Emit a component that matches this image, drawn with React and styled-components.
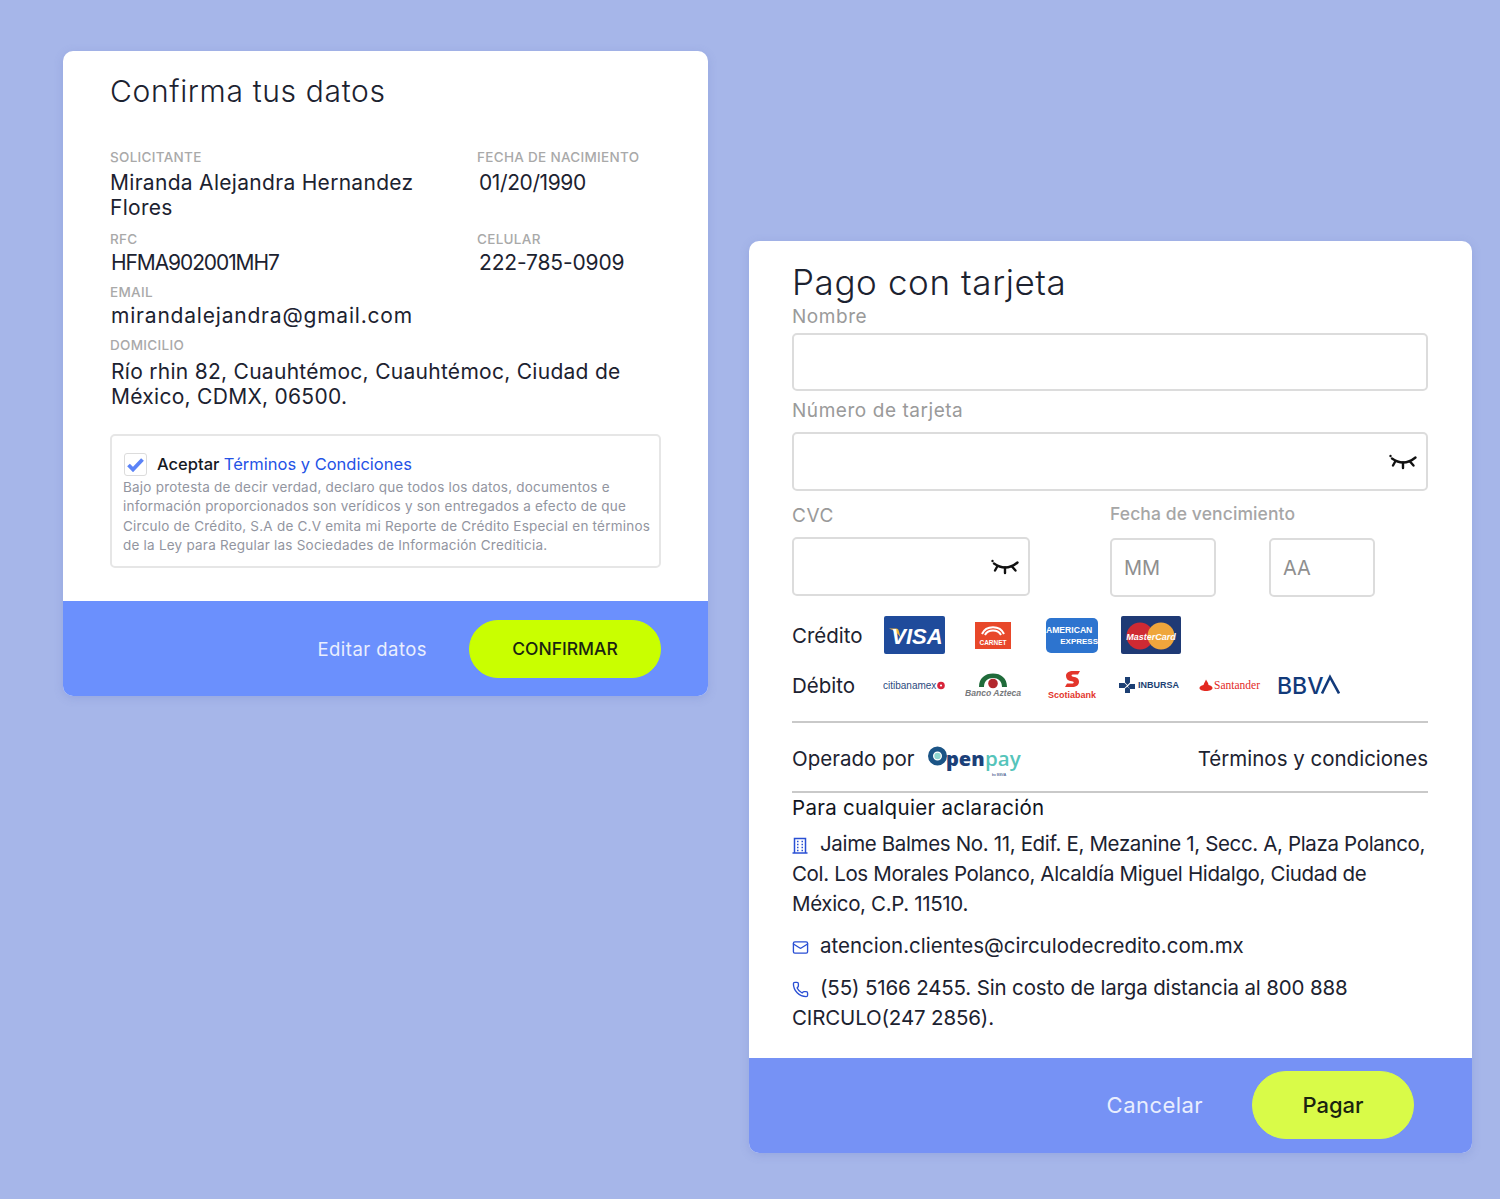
import styled, { createGlobalStyle } from "styled-components";
import { Mail, Phone } from "lucide-react";

const GlobalStyle = createGlobalStyle`
  body {
    margin: 0;
    background: #a6b6e9;
    font-family: Inter, "Liberation Sans", sans-serif;
    color: #1c2230;
  }
`;

const Page = styled.div`
  display: flex;
  align-items: flex-start;
  gap: 41px;
  width: 1500px;
  height: 1199px;
  padding: 51px 0 0 63px;
  box-sizing: border-box;
  overflow: hidden;
`;

const Card = styled.section`
  background: #fff;
  border-radius: 10px;
  overflow: hidden;
  flex: none;
  width: ${(p) => p.$width}px;
  margin-top: ${(p) => p.$top || 0}px;
  box-shadow: 0 2px 10px rgba(90, 110, 190, 0.22);
`;

const Body = styled.div`
  padding: ${(p) => p.$padding};
`;

const Title = styled.h1`
  margin: 0;
  font-weight: 300;
  font-size: ${(p) => p.$size}px;
  line-height: ${(p) => p.$line}px;
  letter-spacing: ${(p) => p.$track}px;
  color: #1c2230;
`;

const InfoGrid = styled.div`
  display: grid;
  grid-template-columns: 367px 1fr;
  margin-top: 37px;
`;

const Field = styled.div`
  grid-column: ${(p) => (p.$wide ? "1 / -1" : "auto")};
  margin-bottom: ${(p) => p.$after || 0}px;
  padding-right: ${(p) => (p.$wide ? 0 : 30)}px;
`;

const SmallLabel = styled.div`
  font-size: 13.5px;
  line-height: 18px;
  font-weight: 500;
  letter-spacing: 0.3px;
  white-space: nowrap;
  color: #a9a9a9;
`;

const Value = styled.div`
  font-size: 21px;
  line-height: 25px;
  font-weight: 400;
  letter-spacing: ${(p) => p.$track || 0}px;
  color: #1c2230;
  margin-top: ${(p) => p.$gap}px;
  margin-left: ${(p) => p.$indent || 0}px;
`;

const TermsBox = styled.div`
  margin-top: 25px;
  height: 134px;
  box-sizing: border-box;
  padding: 17px 4px 0 11px;
  border: 2px solid #e6e6e6;
  border-radius: 5px;
`;

const TermsHead = styled.div`
  display: flex;
  align-items: center;
  gap: 10px;
  font-size: 16.5px;
  line-height: 23px;
  font-weight: 500;
  color: #15191f;
`;

const CheckBox = styled.span`
  width: 23px;
  height: 23px;
  margin-left: 1px;
  box-sizing: border-box;
  display: flex;
  align-items: center;
  justify-content: center;
  border: 1px solid #dcdcdc;
  border-radius: 3px;
`;

const TermsLink = styled.span`
  color: #2452e6;
  font-weight: 400;
`;

const TermsText = styled.p`
  margin: 2px 0 0;
  font-size: 13.5px;
  line-height: 19.3px;
  letter-spacing: 0.22px;
  color: #92959f;
`;

const Footer = styled.div`
  display: flex;
  align-items: center;
  justify-content: flex-end;
  box-sizing: border-box;
  height: 95px;
  background: ${(p) => p.$color};
  padding-right: ${(p) => p.$pad}px;
  padding-bottom: ${(p) => p.$lift || 0}px;
  gap: ${(p) => p.$gap}px;
  margin-top: ${(p) => p.$top}px;
`;

const GhostAction = styled.span`
  color: #e9eefe;
  font-size: ${(p) => p.$size}px;
  letter-spacing: 0.45px;
  font-weight: 400;
`;

const PrimaryButton = styled.button`
  width: ${(p) => p.$w}px;
  height: ${(p) => p.$h}px;
  border: 1px solid ${(p) => p.$color};
  border-radius: 40px;
  background: ${(p) => p.$color};
  color: #1a2410;
  font-family: inherit;
  font-size: ${(p) => p.$size}px;
  font-weight: 500;
`;

const FormLabel = styled.div`
  font-size: ${(p) => p.$size || 19}px;
  line-height: 22px;
  letter-spacing: ${(p) => p.$track ?? 0.55}px;
  color: ${(p) => p.$color || "#9a9a9a"};
  margin-top: ${(p) => p.$top}px;
  margin-bottom: ${(p) => p.$bottom}px;
  font-weight: ${(p) => p.$weight || 400};
`;

const InputBox = styled.div`
  position: relative;
  box-sizing: border-box;
  display: flex;
  align-items: center;
  padding: 0 12px;
  width: ${(p) => (p.$w ? `${p.$w}px` : "100%")};
  height: ${(p) => p.$h || 59}px;
  border: 2px solid #dcdcdc;
  border-radius: 5px;
  font-size: 20px;
  color: #8f8f8f;
`;

const EyeSlot = styled.span`
  position: absolute;
  right: 8px;
  top: 50%;
  transform: translateY(-50%);
  display: flex;
`;

const SplitRow = styled.div`
  display: flex;
  gap: 80px;
`;

const DateInputs = styled.div`
  display: flex;
  gap: 53px;
`;

const BrandRow = styled.div`
  display: flex;
  align-items: center;
  height: ${(p) => p.$h}px;
  margin-top: ${(p) => p.$top}px;
`;

const BrandLabel = styled.span`
  width: ${(p) => p.$w}px;
  flex: none;
  font-size: 20.5px;
  color: #1c2230;
`;

const LogoSlot = styled.span`
  display: flex;
  flex: none;
  margin-left: ${(p) => p.$left || 0}px;
`;

const Rule = styled.hr`
  margin: ${(p) => p.$top}px 0 0;
  border: 0;
  border-top: 2px solid #c9c9c9;
`;

const OperatedRow = styled.div`
  display: flex;
  align-items: center;
  justify-content: space-between;
  box-sizing: border-box;
  height: 68px;
  padding-top: 3px;
  font-size: 20.5px;
  color: #1c2230;
`;

const OperatedBy = styled.div`
  display: flex;
  align-items: center;
  gap: 13px;
`;

const ContactHeading = styled.div`
  margin-top: 3px;
  font-size: 20.5px;
  line-height: 24px;
  font-weight: 400;
  letter-spacing: 0.3px;
  color: #10141c;
`;

const ContactLine = styled.p`
  margin: ${(p) => p.$top}px 0 0;
  font-size: 20.5px;
  line-height: 30px;
  letter-spacing: ${(p) => p.$track || 0}px;
  color: #1c2230;
`;

const ContactIcon = styled.span`
  display: inline-block;
  width: 28px;
  vertical-align: -3px;
  color: #2a4fd4;
  line-height: 0;
`;

const EyeClosed = () => (
  <svg width="30" height="20" viewBox="0 0 30 20" fill="none" stroke="#111" strokeWidth="2.400" strokeLinecap="round">
    <path d="M4 6.500C9 10 13 10.500 15 10.500S22 10 27.500 5.500" />
    <path d="M7.500 9L5 13.500M15 10.500V16M22 9.500L25.500 13.500" />
    <circle cx="2.500" cy="4" r="1.200" fill="#111" stroke="none" />
  </svg>
);

const BuildingIcon = () => (
  <svg width="16" height="17" viewBox="0 0 16 17" fill="none" stroke="currentColor" strokeWidth="1.500">
    <path d="M2.500 16V1.500H13.500V16M.5 16H15.500" />
    <path d="M5 4.500h1.500M9.500 4.500H11M5 7.500h1.500M9.500 7.500H11M5 10.500h1.500M9.500 10.500H11M5 13.500h1.500M9.500 13.500H11" strokeWidth="1.600" />
  </svg>
);

const VisaLogo = () => (
  <svg width="61" height="38" viewBox="0 0 61 38">
    <rect width="61" height="38" rx="2" fill="#1f4b9b" />
    <path d="M5 12.500h7c2 0 2.500 1 3 3l1.500 6C14 17 10 14 5 12.500Z" fill="#f0b43c" />
    <text x="33" y="27.500" textAnchor="middle" fontFamily="Liberation Sans" fontWeight="700" fontStyle="italic" fontSize="22" fill="#fff">VISA</text>
  </svg>
);

const CarnetLogo = () => (
  <svg width="36" height="27" viewBox="0 0 36 27">
    <rect width="36" height="27" fill="#e8482a" />
    <path d="M7 12C11 3 25 3 29 12M10 13C13 7 23 7 26 13" fill="none" stroke="#fff" strokeWidth="2" />
    <text x="18" y="22.500" textAnchor="middle" fontFamily="Liberation Sans" fontWeight="700" fontSize="6.500" fill="#fff">CARNET</text>
  </svg>
);

const AmexLogo = () => (
  <svg width="52" height="35" viewBox="0 0 52 35">
    <rect width="52" height="35" rx="5" fill="#2d74cf" />
    <text x="0" y="15" fontFamily="Liberation Sans" fontWeight="700" fontSize="8.600" fill="#fff">AMERICAN</text>
    <text x="52" y="26" textAnchor="end" fontFamily="Liberation Sans" fontWeight="700" fontSize="8" fill="#fff">EXPRESS</text>
  </svg>
);

const MasterCardLogo = () => (
  <svg width="60" height="38" viewBox="0 0 60 38">
    <rect width="60" height="38" rx="2" fill="#1f3a75" />
    <circle cx="19" cy="20" r="13.500" fill="#cf2a33" />
    <circle cx="40" cy="20" r="13.500" fill="#efa63c" />
    <text x="30" y="23.500" textAnchor="middle" fontFamily="Liberation Sans" fontWeight="700" fontStyle="italic" fontSize="9" fill="#fff">MasterCard</text>
  </svg>
);

const CitibanamexLogo = () => (
  <svg width="62" height="14" viewBox="0 0 62 14">
    <text x="0" y="10.500" fontFamily="Liberation Sans" fontSize="10" fill="#2c4a7d">citibanamex</text>
    <circle cx="58" cy="7.500" r="3.800" fill="#d8243a" />
    <circle cx="58" cy="7.500" r="1.100" fill="#fff" />
  </svg>
);

const AztecaLogo = () => (
  <svg width="58" height="26" viewBox="0 0 58 26">
    <path d="M14 15C14 6 20 1.500 28 1.500S42 6 42 15H37C37 9 33 6 28 6S19 9 19 15Z" fill="#1f6b3a" />
    <circle cx="28" cy="11.500" r="4.800" fill="#b3282d" />
    <text x="28" y="24" textAnchor="middle" fontFamily="Liberation Sans" fontWeight="700" fontStyle="italic" fontSize="8.600" fill="#77797c">Banco Azteca</text>
  </svg>
);

const ScotiaLogo = () => (
  <svg width="50" height="30" viewBox="0 0 50 30">
    <path d="M19 6C19 2.500 22 1 26 1h7l-2 3.500h-5c-2 0-2 2 0 2.200 4 .3 6 2 6 5 0 3.300-3 5.300-7 5.300h-7l2-3.500h5c2 0 2.500-2 0-2.300-4-.4-6-2-6-5.200Z" fill="#e3352b" />
    <text x="25" y="28" textAnchor="middle" fontFamily="Liberation Sans" fontWeight="700" fontSize="9" fill="#e3352b">Scotiabank</text>
  </svg>
);

const InburLogo = () => (
  <svg width="67" height="18" viewBox="0 0 67 18">
    <path d="M7 1h5v5.500L9.500 9 7 6.500ZM1 7h5.500L9 9.500 6.500 12H1ZM12 8h5v5h-5L9.800 10.500ZM7 12.500 9.300 10.800 12 13v4H7Z" fill="#1c3f73" />
    <text x="20" y="11.500" fontFamily="Liberation Sans" fontWeight="700" fontSize="9" fill="#1c3f73">INBURSA</text>
  </svg>
);

const SantanderLogo = () => (
  <svg width="63" height="14" viewBox="0 0 63 14">
    <path d="M7 1.500C8 4 9.500 4.500 9.500 7 12 7.500 13.500 8.500 13.500 10 13.500 12 10.500 13 7 13S.5 12 .5 10C.5 8.500 2 7.500 4.500 7 5 5 6 4 7 1.500Z" fill="#e3281f" />
    <text x="15" y="11" fontFamily="Liberation Serif" fontSize="11.500" fill="#e3281f">Santander</text>
  </svg>
);

const BbvaLogo = () => (
  <svg width="63" height="30" viewBox="0 0 63 30">
    <text x="0" y="23.500" fontFamily="Inter" fontWeight="500" fontSize="23" fill="#123a7a">BBV</text>
    <path d="M45 23.500L53 7 62 23.500" fill="none" stroke="#123a7a" strokeWidth="2.600" />
  </svg>
);

const OpenpayLogo = () => (
  <svg width="95" height="34" viewBox="0 0 95 34">
    <circle cx="9.500" cy="14" r="7" fill="none" stroke="#1b5486" strokeWidth="5" />
    <circle cx="9.500" cy="14" r="3.200" fill="#8fd6d0" />
    <text x="18" y="23.500" fontFamily="Open Sans" fontWeight="800" fontSize="20" fill="#1b4078">pen</text>
    <text x="57" y="23.500" fontFamily="Open Sans" fontWeight="600" fontSize="20.500" fill="#55c4ba">pay</text>
    <text x="64" y="33.500" fontFamily="Liberation Sans" fontSize="3.600" fill="#1b4078">by BBVA</text>
  </svg>
);

export default function App() {
  return (
    <Page>
      <GlobalStyle />
      <Card $width={645}>
        <Body $padding="20px 47px 0">
          <Title $size={30} $line={40} $track={0.65}>Confirma tus datos</Title>
          <InfoGrid>
            <Field $after={10}>
              <SmallLabel>SOLICITANTE</SmallLabel>
              <Value $gap={4} $track={0.3}>Miranda Alejandra Hernandez Flores</Value>
            </Field>
            <Field $after={10}>
              <SmallLabel>FECHA DE NACIMIENTO</SmallLabel>
              <Value $gap={4} $indent={2} $track={-0.4}>01/20/1990</Value>
            </Field>
            <Field $after={8}>
              <SmallLabel>RFC</SmallLabel>
              <Value $gap={2} $indent={1} $track={-1.1}>HFMA902001MH7</Value>
            </Field>
            <Field $after={8}>
              <SmallLabel>CELULAR</SmallLabel>
              <Value $gap={2} $indent={2} $track={-0.15}>222-785-0909</Value>
            </Field>
            <Field $wide $after={8}>
              <SmallLabel>EMAIL</SmallLabel>
              <Value $gap={2} $indent={1} $track={0.8}>mirandalejandra@gmail.com</Value>
            </Field>
            <Field $wide>
              <SmallLabel>DOMICILIO</SmallLabel>
              <Value $gap={5} $indent={1} $track={0.28}>Río rhin 82, Cuauhtémoc, Cuauhtémoc, Ciudad de México, CDMX, 06500.</Value>
            </Field>
          </InfoGrid>
          <TermsBox>
            <TermsHead>
              <CheckBox>
                <svg width="17" height="14" viewBox="0 0 17 14" fill="none" stroke="#5b83f7" strokeWidth="3.800">
                  <path d="M1.500 7L6 11.500 15.500 1.500" />
                </svg>
              </CheckBox>
              <span>Aceptar <TermsLink>Términos y Condiciones</TermsLink></span>
            </TermsHead>
            <TermsText>
              Bajo protesta de decir verdad, declaro que todos los datos, documentos e información proporcionados son verídicos y son entregados a efecto de que Circulo de Crédito, S.A de C.V emita mi Reporte de Crédito Especial en términos de la Ley para Regular las Sociedades de Información Crediticia.
            </TermsText>
          </TermsBox>
        </Body>
        <Footer $color="#6b90fd" $pad={47} $gap={42} $top={33}>
          <GhostAction $size={18.5}>Editar datos</GhostAction>
          <PrimaryButton $w={192} $h={58} $size={17.5} $color="#c9ff00">CONFIRMAR</PrimaryButton>
        </Footer>
      </Card>

      <Card $width={723} $top={190}>
        <Body $padding="19px 44px 0 43px">
          <Title $size={35} $line={44} $track={0.6}>Pago con tarjeta</Title>
          <FormLabel $top={2} $bottom={5}>Nombre</FormLabel>
          <InputBox $h={58} />
          <FormLabel $top={9} $bottom={10}>Número de tarjeta</FormLabel>
          <InputBox>
            <EyeSlot><EyeClosed /></EyeSlot>
          </InputBox>
          <SplitRow>
            <div>
              <FormLabel $top={14} $bottom={10}>CVC</FormLabel>
              <InputBox $w={238}>
                <EyeSlot><EyeClosed /></EyeSlot>
              </InputBox>
            </div>
            <div>
              <FormLabel $top={12} $bottom={13} $weight={500} $size={17.5} $track={0.1} $color="#a6a6a6">Fecha de vencimiento</FormLabel>
              <DateInputs>
                <InputBox $w={106}>MM</InputBox>
                <InputBox $w={106}>AA</InputBox>
              </DateInputs>
            </div>
          </SplitRow>
          <BrandRow $h={38} $top={19}>
            <BrandLabel $w={92}>Crédito</BrandLabel>
            <LogoSlot><VisaLogo /></LogoSlot>
            <LogoSlot $left={30}><CarnetLogo /></LogoSlot>
            <LogoSlot $left={35}><AmexLogo /></LogoSlot>
            <LogoSlot $left={23}><MasterCardLogo /></LogoSlot>
          </BrandRow>
          <BrandRow $h={30} $top={16}>
            <BrandLabel $w={91}>Débito</BrandLabel>
            <LogoSlot><CitibanamexLogo /></LogoSlot>
            <LogoSlot $left={20}><AztecaLogo /></LogoSlot>
            <LogoSlot $left={24}><ScotiaLogo /></LogoSlot>
            <LogoSlot $left={21}><InburLogo /></LogoSlot>
            <LogoSlot $left={14}><SantanderLogo /></LogoSlot>
            <LogoSlot $left={15}><BbvaLogo /></LogoSlot>
          </BrandRow>
          <Rule $top={21} />
          <OperatedRow>
            <OperatedBy>
              Operado por
              <OpenpayLogo />
            </OperatedBy>
            <span>Términos y condiciones</span>
          </OperatedRow>
          <Rule $top={0} />
          <ContactHeading>Para cualquier aclaración</ContactHeading>
          <ContactLine $top={9} $track={-0.35}>
            <ContactIcon><BuildingIcon /></ContactIcon>
            Jaime Balmes No. 11, Edif. E, Mezanine 1, Secc. A, Plaza Polanco, Col. Los Morales Polanco, Alcaldía Miguel Hidalgo, Ciudad de México, C.P. 11510.
          </ContactLine>
          <ContactLine $top={12}>
            <ContactIcon><Mail size={17} strokeWidth={1.9} /></ContactIcon>
            atencion.clientes@circulodecredito.com.mx
          </ContactLine>
          <ContactLine $top={12} $track={-0.15}>
            <ContactIcon><Phone size={17} strokeWidth={1.9} /></ContactIcon>
            (55) 5166 2455. Sin costo de larga distancia al 800 888 CIRCULO(247 2856).
          </ContactLine>
        </Body>
        <Footer $color="#7692f5" $pad={58} $gap={49} $top={25} $lift={1}>
          <GhostAction $size={22}>Cancelar</GhostAction>
          <PrimaryButton $w={162} $h={68} $size={22} $color="#d9fb48">Pagar</PrimaryButton>
        </Footer>
      </Card>
    </Page>
  );
}
